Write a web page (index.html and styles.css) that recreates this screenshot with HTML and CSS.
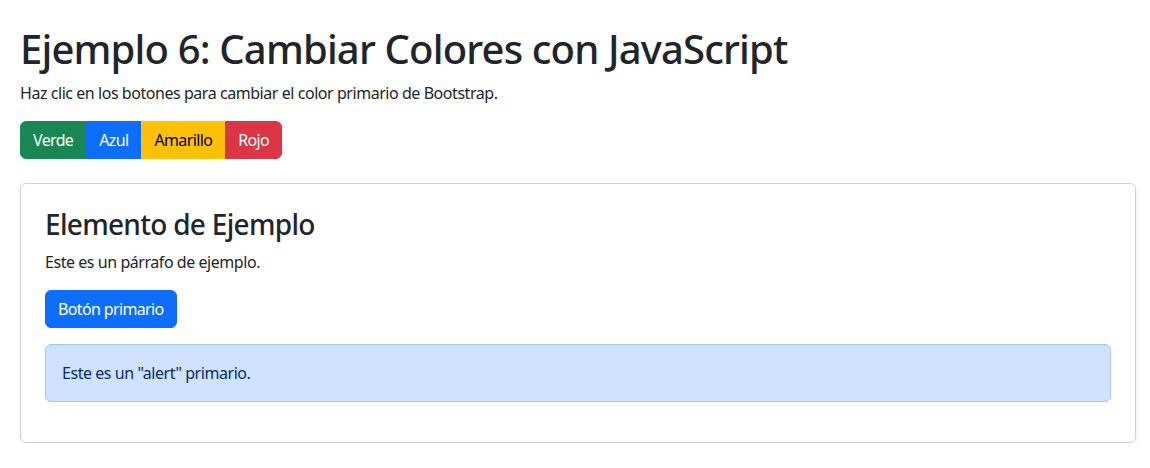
FILE: index.html
```html
<!DOCTYPE html>
<html lang="es">
<head>
<meta charset="utf-8">
<title>Ejemplo 6</title>
<link rel="stylesheet" href="styles.css">
</head>
<body>
<div class="page">
  <h1 class="title">Ejemplo 6: Cambiar Colores con JavaScript</h1>
  <p class="lead-text">Haz clic en los botones para cambiar el color primario de Bootstrap.</p>
  <div class="btn-group">
    <button class="btn btn-success">Verde</button>
    <button class="btn btn-primary">Azul</button>
    <button class="btn btn-warning">Amarillo</button>
    <button class="btn btn-danger">Rojo</button>
  </div>
  <div class="card">
    <div class="card-body">
      <h3 class="card-title">Elemento de Ejemplo</h3>
      <p class="card-text">Este es un párrafo de ejemplo.</p>
      <button class="btn btn-primary btn-solo">Botón primario</button>
      <div class="alert">Este es un "alert" primario.</div>
    </div>
  </div>
</div>
</body>
</html>
```
FILE: styles.css
```css
* { box-sizing: border-box; }
html, body { margin: 0; padding: 0; background: #fff; }
body {
  font-family: "Noto Sans", "Open Sans", sans-serif;
  font-size: 16px;
  line-height: 1.5;
  color: #212529;
  letter-spacing: -0.028em;
}
.page {
  padding: 25px 14px 0 20px;
}
.title {
  font-size: 40px;
  font-weight: 500;
  line-height: 1.2;
  margin: 0 0 8px;
  letter-spacing: -0.021em;
}
.lead-text { margin: 0 0 16px; }
.btn-group { display: inline-flex; }
.btn {
  font-family: inherit;
  font-size: 16px;
  line-height: 24px;
  letter-spacing: -0.04em;
  padding: 6px 12px;
  border: 1px solid transparent;
  border-radius: 0;
  color: #fff;
  cursor: pointer;
}
.btn-group .btn:first-child { border-radius: 6px 0 0 6px; }
.btn-group .btn:last-child { border-radius: 0 6px 6px 0; }
.btn-success { background: #198754; border-color: #198754; }
.btn-primary { background: #0d6efd; border-color: #0d6efd; }
.btn-warning { background: #ffc107; border-color: #ffc107; color: #000; }
.btn-danger { background: #dc3545; border-color: #dc3545; }
.btn-solo { border-radius: 6px; display: block; }
.card {
  margin-top: 24px;
  border: 1px solid rgba(0,0,0,.175);
  border-radius: 6px;
  box-shadow: 0 2px 4px rgba(0,0,0,.075);
}
.card-body { padding: 24px; }
.card-title {
  font-size: 28px;
  font-weight: 500;
  line-height: 1.2;
  margin: 0 0 8px;
  letter-spacing: -0.025em;
}
.card-text { margin: 0 0 16px; }
.alert {
  margin: 16px 0;
  padding: 16px;
  border: 1px solid #9ec5fe;
  border-radius: 6px;
  background: #cfe2ff;
  color: #052c65;
}
```
